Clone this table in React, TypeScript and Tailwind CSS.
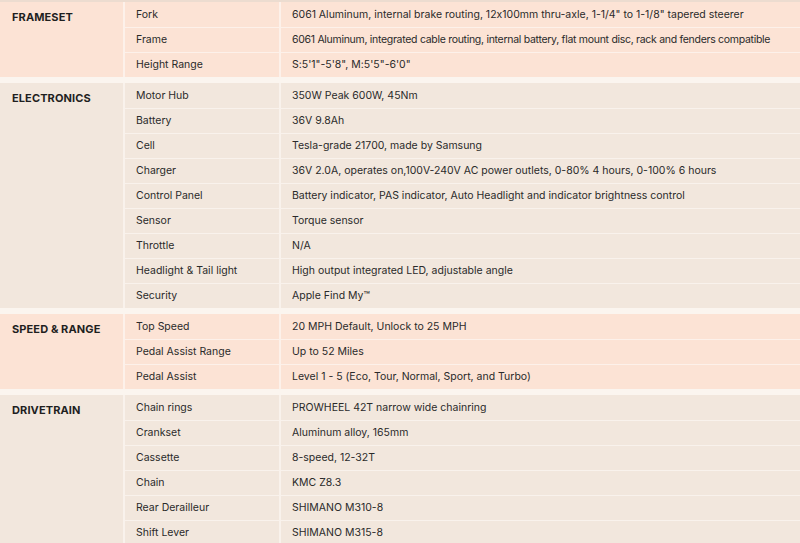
import React from 'react';

type Row = [string, string, boolean?];

type Section = {
  title: string;
  tone: 'peach' | 'sand';
  rows: Row[];
};

const sections: Section[] = [
  {
    title: 'FRAMESET',
    tone: 'peach',
    rows: [
      ['Fork', '6061 Aluminum, internal brake routing, 12x100mm thru-axle, 1-1/4" to 1-1/8" tapered steerer'],
      ['Frame', '6061 Aluminum, integrated cable routing, internal battery, flat mount disc, rack and fenders compatible', true],
      ['Height Range', 'S:5\'1"-5\'8", M:5\'5"-6\'0"'],
    ],
  },
  {
    title: 'ELECTRONICS',
    tone: 'sand',
    rows: [
      ['Motor Hub', '350W Peak 600W, 45Nm'],
      ['Battery', '36V 9.8Ah'],
      ['Cell', 'Tesla-grade 21700, made by Samsung'],
      ['Charger', '36V 2.0A, operates on,100V-240V AC power outlets, 0-80% 4 hours, 0-100% 6 hours'],
      ['Control Panel', 'Battery indicator, PAS indicator, Auto Headlight and indicator brightness control'],
      ['Sensor', 'Torque sensor'],
      ['Throttle', 'N/A'],
      ['Headlight & Tail light', 'High output integrated LED, adjustable angle'],
      ['Security', 'Apple Find My™'],
    ],
  },
  {
    title: 'SPEED & RANGE',
    tone: 'peach',
    rows: [
      ['Top Speed', '20 MPH Default, Unlock to 25 MPH'],
      ['Pedal Assist Range', 'Up to 52 Miles'],
      ['Pedal Assist', 'Level 1 - 5 (Eco, Tour, Normal, Sport, and Turbo)'],
    ],
  },
  {
    title: 'DRIVETRAIN',
    tone: 'sand',
    rows: [
      ['Chain rings', 'PROWHEEL 42T narrow wide chainring'],
      ['Crankset', 'Aluminum alloy, 165mm'],
      ['Cassette', '8-speed, 12-32T'],
      ['Chain', 'KMC Z8.3'],
      ['Rear Derailleur', 'SHIMANO M310-8'],
      ['Shift Lever', 'SHIMANO M315-8'],
    ],
  },
];

const SpecSection: React.FC<{ section: Section }> = ({ section }) => {
  const bg = section.tone === 'peach' ? 'bg-[#fce3d5]' : 'bg-[#f2e7dd]';
  const line = section.tone === 'peach' ? 'border-[#fdf1ea]' : 'border-[#f9f2ec]';
  return (
    <div className={`flex ${bg}`}>
      {/* Category */}
      <div className={`w-[125px] shrink-0 border-r-2 ${line} pl-3 pt-[7px]`}>
        <span className="text-[11px] font-bold tracking-[0.01em] text-[#1f1f1f]">{section.title}</span>
      </div>

      {/* Rows */}
      <div className="min-w-0 flex-1">
        {section.rows.map(([name, value, tight], i) => (
          <div key={name} className={`flex h-[25px] items-center ${i > 0 ? `border-t ${line}` : ''}`}>
            <div className={`flex h-full w-[156px] shrink-0 items-center border-r-2 ${line} pl-[11px]`}>
              {name}
            </div>
            <div className={`whitespace-nowrap pl-[11px] ${tight ? 'tracking-[-0.028em]' : ''}`}>{value}</div>
          </div>
        ))}
      </div>
    </div>
  );
};

const App: React.FC = () => {
  return (
    <div
      className="h-[543px] w-[800px] overflow-hidden bg-[#fbf5ef] text-[10.5px] text-[#2a2a2a] [font-feature-settings:'calt'_0]"
      style={{ fontFamily: 'Inter, "Noto Sans", sans-serif' }}
    >
      <div className="h-[2px] bg-[#ecdcd0]" />
      <div className="flex flex-col gap-[6px]">
        {sections.map((s) => (
          <SpecSection key={s.title} section={s} />
        ))}
      </div>
    </div>
  );
};

export default App;
